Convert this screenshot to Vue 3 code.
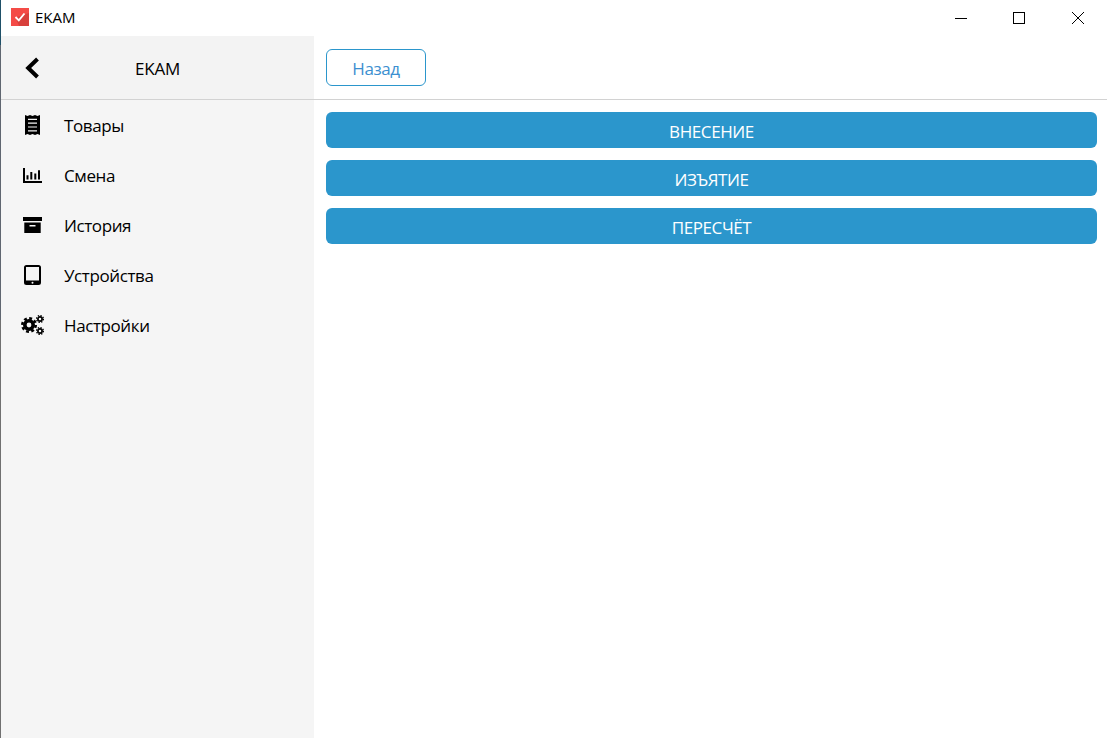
<script setup>
const items = [
  { label: 'Товары', icon: 'receipt' },
  { label: 'Смена', icon: 'chart' },
  { label: 'История', icon: 'archive' },
  { label: 'Устройства', icon: 'tablet' },
  { label: 'Настройки', icon: 'cogs' }
]
const actions = ['ВНЕСЕНИЕ', 'ИЗЪЯТИЕ', 'ПЕРЕСЧЁТ']
</script>

<template>
  <div class="window">
    <header class="titlebar">
      <div class="app-title">
        <svg class="app-logo" width="18" height="18" viewBox="0 0 18 18">
          <rect width="18" height="18" fill="#f44b47" />
          <path d="M18 5 L18 18 L8 18 L4.5 9.5 Z" fill="#d8403c" />
          <path d="M4.5 9 L7.8 12.3 L13.5 5.5" fill="none" stroke="#fff" stroke-width="1.9" />
        </svg>
        <span>EKAM</span>
      </div>
      <div class="win-controls">
        <svg width="12" height="12" viewBox="0 0 12 12"><path d="M0 6.5H12" stroke="#000" /></svg>
        <svg width="12" height="12" viewBox="0 0 12 12"><rect x="0.5" y="0.5" width="11" height="11" fill="none" stroke="#000" /></svg>
        <svg width="14" height="14" viewBox="0 0 14 14"><path d="M1 1L13 13M13 1L1 13" stroke="#000" /></svg>
      </div>
    </header>
    <div class="content">
      <aside class="sidebar">
        <div class="side-head">
          <svg class="back" width="16" height="22" viewBox="0 0 16 22">
            <path d="M13.5 2 L4.2 11 L13.5 20" fill="none" stroke="#000" stroke-width="4" />
          </svg>
          <span class="side-title">EKAM</span>
        </div>
        <nav class="nav">
          <div v-for="item in items" :key="item.label" class="nav-item">
            <span class="nav-icon">
              <svg v-if="item.icon === 'receipt'" width="15" height="20" viewBox="0 0 15 20">
                <path fill-rule="evenodd" d="M0 0 L2.5 1 L5 0 L7.5 1 L10 0 L12.5 1 L15 0 V20 L12.5 19 L10 20 L7.5 19 L5 20 L2.5 19 L0 20 Z M3 3.8 V5 H12 V3.8 Z M3 7.6 V8.8 H12 V7.6 Z M3 11.4 V12.6 H12 V11.4 Z M3 15.2 V16.4 H12 V15.2 Z" fill="#000" />
              </svg>
              <svg v-else-if="item.icon === 'chart'" width="19" height="15" viewBox="0 0 19 15">
                <path d="M1 0 V14 H19" fill="none" stroke="#000" stroke-width="2" />
                <path d="M4.5 7.3 V11.5 M8.3 4 V11.5 M12.3 5.6 V11.5 M16 2.3 V11.5" fill="none" stroke="#000" stroke-width="2" />
              </svg>
              <svg v-else-if="item.icon === 'archive'" width="19" height="16" viewBox="0 0 19 16">
                <path fill-rule="evenodd" d="M0 0 H19 V4 H0 Z M1.3 5.5 H17.7 V16 H1.3 Z M6.5 8 V9.6 H12.5 V8 Z" fill="#000" />
              </svg>
              <svg v-else-if="item.icon === 'tablet'" width="17" height="20" viewBox="0 0 17 20">
                <path fill-rule="evenodd" d="M2.5 0 H14.5 A2.5 2.5 0 0 1 17 2.5 V17.5 A2.5 2.5 0 0 1 14.5 20 H2.5 A2.5 2.5 0 0 1 0 17.5 V2.5 A2.5 2.5 0 0 1 2.5 0 Z M2 2 V15.5 H15 V2 Z M7.5 17.7 A1 1 0 1 0 9.5 17.7 A1 1 0 1 0 7.5 17.7 Z" fill="#000" />
              </svg>
              <svg v-else width="23" height="20" viewBox="0 0 23 20">
                <g fill="none" stroke="#000">
                  <circle cx="8" cy="10" r="4.2" stroke-width="3.6" />
                  <circle cx="8" cy="10" r="6.7" stroke-width="2.6" stroke-dasharray="2.9 2.36" />
                  <circle cx="19" cy="4" r="2.1" stroke-width="1.7" />
                  <circle cx="19" cy="4" r="3.4" stroke-width="1.3" stroke-dasharray="1.4 1.27" />
                  <circle cx="19" cy="16" r="2.1" stroke-width="1.7" />
                  <circle cx="19" cy="16" r="3.4" stroke-width="1.3" stroke-dasharray="1.4 1.27" />
                </g>
              </svg>
            </span>
            <span class="nav-label">{{ item.label }}</span>
          </div>
        </nav>
      </aside>
      <main class="main">
        <div class="main-head">
          <button class="back-btn">Назад</button>
        </div>
        <div class="actions">
          <button v-for="a in actions" :key="a" class="action">{{ a }}</button>
        </div>
      </main>
    </div>
  </div>
</template>

<style scoped>
.window {
  width: 1107px;
  height: 738px;
  display: flex;
  flex-direction: column;
  background: #fff;
  color: #000;
  font-family: "Open Sans", "Noto Sans", sans-serif;
  overflow: hidden;
  border-left: 1px solid;
  border-image: linear-gradient(to bottom, #1f5068 0, #1f5068 46px, #5f6670 46px, #5f6670 320px, #707070 320px) 1;
  box-sizing: border-box;
}
.titlebar {
  height: 36px;
  flex: none;
  display: flex;
  align-items: center;
  justify-content: space-between;
}
.app-title {
  display: flex;
  align-items: center;
  gap: 6px;
  padding-left: 10px;
  padding-bottom: 2px;
  font-size: 15px;
}
.win-controls {
  display: flex;
  align-items: center;
  gap: 46px;
  padding-right: 22px;
}
.content {
  flex: 1;
  display: flex;
  min-height: 0;
}
.sidebar {
  width: 313px;
  flex: none;
  background: #f5f5f5;
  display: flex;
  flex-direction: column;
}
.side-head {
  height: 63px;
  flex: none;
  display: flex;
  align-items: center;
  position: relative;
  background: #f3f3f3;
  border-bottom: 1px solid #d2d2d2;
  box-sizing: content-box;
}
.back {
  margin-left: 23px;
}
.side-title {
  position: absolute;
  left: 0;
  right: 0;
  padding-top: 1px;
  text-align: center;
  font-size: 17px;
  letter-spacing: -0.2px;
}
.nav {
  display: flex;
  flex-direction: column;
  padding-top: 1px;
}
.nav-item {
  height: 50px;
  display: flex;
  align-items: center;
}
.nav-icon {
  width: 63px;
  flex: none;
  display: flex;
  justify-content: center;
  padding-bottom: 2px;
}
.nav-label {
  padding-bottom: 2px;
  font-size: 17px;
  letter-spacing: -0.4px;
}
.main {
  flex: 1;
  min-width: 0;
  display: flex;
  flex-direction: column;
}
.main-head {
  height: 63px;
  flex: none;
  display: flex;
  align-items: center;
  padding: 0 12px;
  border-bottom: 1px solid #d2d2d2;
  box-sizing: content-box;
}
.back-btn {
  width: 100px;
  height: 37px;
  margin-top: -1px;
  border: 1px solid #2b96cc;
  border-radius: 6px;
  background: #fff;
  color: #3c8fd0;
  font: inherit;
  font-size: 17px;
  letter-spacing: -0.4px;
  padding: 2px 0 0;
}
.actions {
  display: flex;
  flex-direction: column;
  gap: 12px;
  padding: 12px 10px 0 12px;
}
.action {
  height: 36px;
  border: none;
  border-radius: 6px;
  background: #2b96cc;
  color: #fff;
  font: inherit;
  font-size: 17px;
  letter-spacing: -0.4px;
  padding: 3px 0 0;
}
</style>
